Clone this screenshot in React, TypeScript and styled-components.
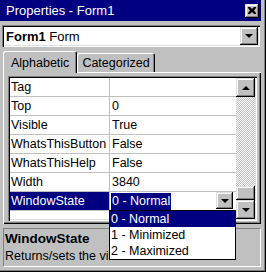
import styled, { createGlobalStyle } from "styled-components";

const GlobalStyle = createGlobalStyle`
  html, body {
    margin: 0;
    padding: 0;
    background: #c0c0c0;
  }

  body {
    font-family: "Liberation Sans", Arial, sans-serif;
    color: #000;
  }
`;

const raised = `
  background: #c0c0c0;
  box-shadow: inset -1px -1px 0 #000, inset 1px 1px 0 #dfdfdf, inset -2px -2px 0 #808080, inset 2px 2px 0 #fff;
`;

const sunken = `
  box-shadow: inset 1px 1px 0 #808080, inset 2px 2px 0 #000, inset -1px -1px 0 #fff, inset -2px -2px 0 #dfdfdf;
`;

const rows = [
  { name: "Tag", value: "" },
  { name: "Top", value: "0" },
  { name: "Visible", value: "True" },
  { name: "WhatsThisButton", value: "False" },
  { name: "WhatsThisHelp", value: "False" },
  { name: "Width", value: "3840" },
];

const windowStates = ["0 - Normal", "1 - Minimized", "2 - Maximized"];

const App = () => {
  return (
    <>
      <GlobalStyle />
      <Window>
        <TitleBar>
          <span>Properties - Form1</span>
          <CloseButton>
            <svg width="8" height="7" viewBox="0 0 8 7">
              <path d="M0 0h2l2 2 2-2h2v1L6 3.5 8 6v1H6L4 5 2 7H0V6l2-2.5L0 1z" fill="#000" />
            </svg>
          </CloseButton>
        </TitleBar>

        <ObjectCombo>
          <span>
            <b>Form1</b> Form
          </span>
          <DropButton $size={18}>
            <Arrow $dir="down" />
          </DropButton>
        </ObjectCombo>

        <TabStrip>
          <Tab $active>Alphabetic</Tab>
          <Tab>Categorized</Tab>
        </TabStrip>

        <TabPanel>
          <Grid>
            <Rows>
              {rows.map((row) => (
                <Row key={row.name}>
                  <NameCell>{row.name}</NameCell>
                  <ValueCell>{row.value}</ValueCell>
                </Row>
              ))}
              <Row>
                <NameCell $selected>WindowState</NameCell>
                <EditCell>
                  <SelectedText>0 - Normal</SelectedText>
                  <DropButton $size={17}>
                    <Arrow $dir="down" />
                  </DropButton>
                  <DropList>
                    {windowStates.map((item, i) => (
                      <DropItem key={item} $selected={i === 0}>
                        {item}
                      </DropItem>
                    ))}
                  </DropList>
                </EditCell>
              </Row>
            </Rows>
            <ScrollBar>
              <ScrollButton>
                <Arrow $dir="up" />
              </ScrollButton>
              <Track>
                <Thumb />
              </Track>
              <ScrollButton>
                <Arrow $dir="down" />
              </ScrollButton>
            </ScrollBar>
          </Grid>
        </TabPanel>

        <Description>
          <DescTitle>WindowState</DescTitle>
          <DescText>Returns/sets the visual state of a form.</DescText>
        </Description>
      </Window>
    </>
  );
};

export default App;

const Window = styled.div`
  position: relative;
  display: flex;
  flex-direction: column;
  width: 266px;
  height: 272px;
  box-sizing: border-box;
  padding: 0 5px 5px 0;
  overflow: hidden;

  background: #c0c0c0;
  box-shadow: inset -1px -1px 0 #000, inset -2px -2px 0 #808080;
`;

const TitleBar = styled.div`
  display: flex;
  justify-content: space-between;
  align-items: center;
  height: 21px;
  padding: 0 2px 0 6px;

  background: #000080;
  color: #fff;
  font-size: 13px;
`;

const CloseButton = styled.div`
  display: flex;
  justify-content: center;
  align-items: center;
  width: 14px;
  height: 14px;
  ${raised}
`;

const ObjectCombo = styled.div`
  display: flex;
  justify-content: space-between;
  align-items: center;
  width: 258px;
  height: 22px;
  box-sizing: border-box;
  margin: 4px 0 0 2px;
  padding: 2px 2px 2px 4px;

  background: #fff;
  font-size: 13px;
  ${sunken}

  b {
    font-weight: bold;
  }
`;

const DropButton = styled.div<{ $size: number }>`
  display: flex;
  justify-content: center;
  align-items: center;
  flex-shrink: 0;
  width: ${({ $size }) => $size}px;
  height: ${({ $size }) => $size}px;
  ${raised}
`;

const Arrow = styled.span<{ $dir: "up" | "down" }>`
  width: 0;
  height: 0;
  border-left: 4px solid transparent;
  border-right: 4px solid transparent;
  ${({ $dir }) =>
    $dir === "down" ? "border-top: 4px solid #000;" : "border-bottom: 4px solid #000;"}
`;

const TabStrip = styled.div`
  display: flex;
  align-items: flex-end;
  height: 21px;
  margin-top: 4px;
  padding-left: 3px;
`;

const Tab = styled.div<{ $active?: boolean }>`
  position: relative;
  z-index: ${({ $active }) => ($active ? 2 : 1)};
  display: flex;
  align-items: center;
  height: ${({ $active }) => ($active ? 22 : 19)}px;
  box-sizing: border-box;
  margin-bottom: ${({ $active }) => ($active ? -1 : 0)}px;
  padding: ${({ $active }) => ($active ? "1px 8px 0 8px" : "0 5px")};

  background: #c0c0c0;
  border-radius: 2px 2px 0 0;
  box-shadow: inset 1px 1px 0 #fff, inset -1px 0 0 #000, inset -2px 0 0 #808080;
  font-size: 12.5px;
`;

const TabPanel = styled.div`
  width: 258px;
  height: 152px;
  box-sizing: border-box;
  margin-left: 3px;
  padding: 4px 4px 3px 5px;

  box-shadow: inset 1px 1px 0 #fff, inset -1px -1px 0 #000, inset -2px -2px 0 #808080;
`;

const Grid = styled.div`
  display: flex;
  height: 145px;
  box-sizing: border-box;
  padding: 2px;

  background: #fff;
  ${sunken}
`;

const Rows = styled.div`
  display: flex;
  flex-direction: column;
  width: 226px;
`;

const Row = styled.div`
  display: grid;
  grid-template-columns: 100px 1fr;
  height: 19px;
  box-sizing: border-box;

  border-bottom: 1px solid #c0c0c0;
  font-size: 12.5px;
  line-height: 18px;
`;

const NameCell = styled.div<{ $selected?: boolean }>`
  padding-left: 1px;
  overflow: hidden;
  white-space: nowrap;

  border-right: 1px solid #c0c0c0;
  background: ${({ $selected }) => ($selected ? "#000080" : "#fff")};
  color: ${({ $selected }) => ($selected ? "#fff" : "#000")};
`;

const ValueCell = styled.div`
  padding-left: 2px;
  overflow: hidden;
  white-space: nowrap;
`;

const EditCell = styled.div`
  position: relative;
  display: flex;
  justify-content: space-between;
  align-items: flex-start;
  padding: 0 3px 0 1px;
`;

const SelectedText = styled.span`
  padding: 0 1px;
  background: #000080;
  color: #fff;
  line-height: 17px;
  margin-top: 1px;
`;

const DropList = styled.div`
  position: absolute;
  top: 18px;
  left: -1px;
  z-index: 10;
  width: 127px;
  box-sizing: border-box;

  background: #fff;
  border: 1px solid #000;
`;

const DropItem = styled.div<{ $selected?: boolean }>`
  height: 16px;
  padding-left: 1px;

  background: ${({ $selected }) => ($selected ? "#000080" : "#fff")};
  color: ${({ $selected }) => ($selected ? "#fff" : "#000")};
  line-height: 16px;
`;

const ScrollBar = styled.div`
  display: flex;
  flex-direction: column;
  width: 19px;
`;

const ScrollButton = styled.div`
  display: flex;
  justify-content: center;
  align-items: center;
  height: 19px;
  ${raised}
`;

const Track = styled.div`
  display: flex;
  flex: 1;
  flex-direction: column;
  justify-content: flex-end;

  background: repeating-conic-gradient(#fff 0 25%, #c0c0c0 0 50%) 0 0 / 2px 2px;
`;

const Thumb = styled.div`
  height: 14px;
  ${raised}
`;

const Description = styled.div`
  width: 258px;
  height: 39px;
  box-sizing: border-box;
  margin: 4px 0 0 3px;
  padding: 2px 0 0 1px;

  border-top: 1px solid #808080;
  border-left: 1px solid #808080;
  border-right: 1px solid #fff;
  border-bottom: 1px solid #fff;
`;

const DescTitle = styled.div`
  font-size: 13.5px;
  font-weight: bold;
  line-height: 16px;
`;

const DescText = styled.div`
  margin-top: 2px;
  font-size: 12.5px;
  line-height: 15px;
  white-space: nowrap;
`;
